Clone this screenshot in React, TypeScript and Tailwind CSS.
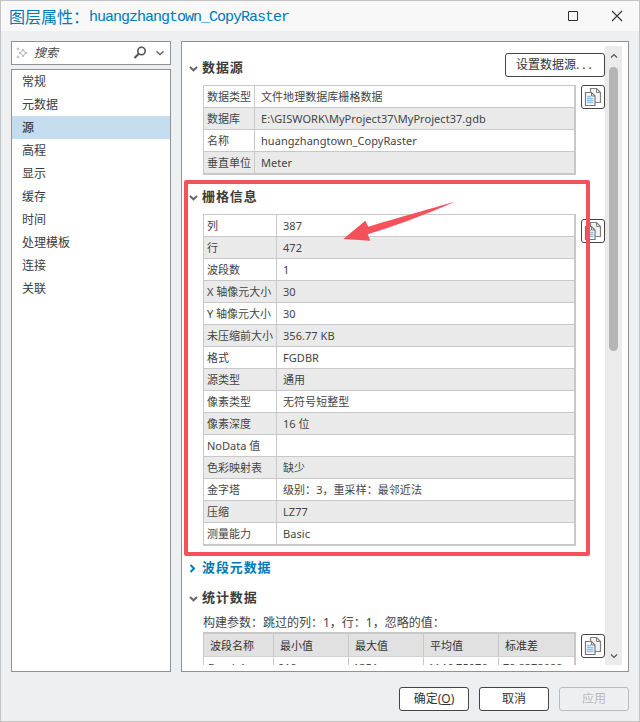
import React from 'react';
import { clsx } from 'clsx';

const navItems = ['常规', '元数据', '源', '高程', '显示', '缓存', '时间', '处理模板', '连接', '关联'];

const sourceRows = [
  ['数据类型', '文件地理数据库栅格数据'],
  ['数据库', 'E:\\GISWORK\\MyProject37\\MyProject37.gdb'],
  ['名称', 'huangzhangtown_CopyRaster'],
  ['垂直单位', 'Meter'],
];

const rasterRows = [
  ['列', '387'],
  ['行', '472'],
  ['波段数', '1'],
  ['X 轴像元大小', '30'],
  ['Y 轴像元大小', '30'],
  ['未压缩前大小', '356.77 KB'],
  ['格式', 'FGDBR'],
  ['源类型', '通用'],
  ['像素类型', '无符号短整型'],
  ['像素深度', '16 位'],
  ['NoData 值', ''],
  ['色彩映射表', '缺少'],
  ['金字塔', '级别：3，重采样：最邻近法'],
  ['压缩', 'LZ77'],
  ['测量能力', 'Basic'],
];

const statHeaders = ['波段名称', '最小值', '最大值', '平均值', '标准差'];
const statValues = ['Band_1', '919', '1351', '1146.75976', '79.8373029'];

const CopyButton: React.FC = () => (
  <button className="flex h-6 w-6 shrink-0 items-center justify-center rounded-[3px] border border-[#444] bg-white">
    <svg width="18" height="20" viewBox="0 0 18 20" fill="none" className="shrink-0">
      <path d="M6.500 1.500h6l4 4v10h-10z" fill="#f3f3f3" stroke="#808080" strokeWidth="1.200" />
      <path d="M12.500 1.500v4h4" stroke="#808080" />
      <path d="M1.500 5.500h6l3.500 3.500v9.500h-9.500z" fill="#fff" stroke="#777" strokeWidth="1.200" />
      <path d="M7.500 5.500v3.500h3.500" stroke="#777" />
      <path d="M3 9.500h4M3 11.500h6.500M3 13.500h6.500M3 15.500h6.500" stroke="#8fc3e6" strokeWidth="1.400" />
    </svg>
  </button>
);

type SectionTitleProps = { label: string; collapsed?: boolean };

const SectionTitle: React.FC<SectionTitleProps> = ({ label, collapsed }) => (
  <div
    className={clsx(
      'flex h-5 items-center text-[13px] font-bold tracking-[0.9px]',
      collapsed ? 'text-[#0079b8]' : 'text-[#3c3c3c]'
    )}
  >
    <svg width="12" height="10" viewBox="0 0 12 10" fill="none" className="mr-0.5 shrink-0" strokeWidth="2">
      {collapsed ? (
        <path d="M2.500 2l3.500 3.500L2.500 9" stroke="#0079b8" />
      ) : (
        <path d="M2 4l3.500 3.300L9 4" stroke="#666" />
      )}
    </svg>
    <span>{label}</span>
  </div>
);

type PropertyTableProps = { rows: string[][]; narrow?: boolean };

const PropertyTable: React.FC<PropertyTableProps> = ({ rows, narrow }) => (
  <div className="w-[373px] border-t border-r-2 border-b-2 border-l border-[#c8c8c8] text-[11px] text-[#444]">
    {rows.map(([name, value], i) => (
      <div
        key={name}
        className={clsx(
          'flex',
          i % 2 ? 'bg-[#eaeaea]' : 'bg-white',
          i < rows.length - 1 ? 'h-[22px] border-b border-[#c8c8c8]' : 'h-[21px]'
        )}
      >
        <div
          className={clsx(
            'flex shrink-0 items-center border-r border-[#c8c8c8] pt-0.5 pl-[3px] whitespace-nowrap',
            narrow ? 'w-[51px]' : 'w-[73px]'
          )}
        >
          {name}
        </div>
        <div className="flex items-center pt-0.5 pl-1.5 tracking-[0.05px] whitespace-nowrap">{value}</div>
      </div>
    ))}
  </div>
);

const SearchBox: React.FC = () => (
  <div className="flex h-6 w-40 items-center border border-[#929292] bg-white">
    <svg width="12" height="12" viewBox="0 0 12 12" fill="none" stroke="#a9a9a9" className="ml-1 shrink-0">
      <path d="M7 2l1.200 2.800L11 6 8.200 7.200 7 10 5.800 7.200 3 6l2.800-1.200z" strokeWidth=".9" />
      <path d="M2 .5v3M.5 2h3M2 8.500v3M.5 10h3" strokeWidth=".8" />
    </svg>
    <span className="ml-1.5 flex-1 text-xs text-[#444] italic">搜索</span>
    <svg width="14" height="14" viewBox="0 0 14 14" fill="none" stroke="#555" className="mr-2">
      <circle cx="8.500" cy="5" r="3.700" strokeWidth="1.600" />
      <path d="M6 7.500L1.500 12" strokeWidth="2.200" />
    </svg>
    <svg width="10" height="8" viewBox="0 0 10 8" fill="none" stroke="#555" className="mr-[5px]">
      <path d="M1.500 2.200L5 5.700l3.500-3.500" strokeWidth="1.300" />
    </svg>
  </div>
);

const StatsTable: React.FC = () => (
  <div className="w-[373px] border-t-2 border-r-2 border-l border-[#c8c8c8] text-[11px] text-[#444]">
    <div className="flex h-[23px] border-b border-[#d0d0d0] bg-[#e1e1e1]">
      {statHeaders.map((h, i) => (
        <div
          key={h}
          className={clsx(
            'flex items-center pt-0.5 pl-1.5 text-[#333]',
            i === 0 ? 'w-[70px]' : 'w-[75px]',
            i < 4 && 'border-r border-[#c8c8c8]'
          )}
        >
          {h}
        </div>
      ))}
    </div>
    <div className="flex h-[22px]">
      {statValues.map((v, i) => (
        <div
          key={v}
          className={clsx(
            'flex items-center pl-1',
            i === 0 ? 'w-[70px]' : 'w-[75px]',
            i < 4 && 'border-r border-[#c8c8c8]'
          )}
        >
          {v}
        </div>
      ))}
    </div>
  </div>
);

export default function App() {
  return (
    <div className="relative flex h-[722px] w-[640px] flex-col overflow-hidden border border-[#c3c3c3] bg-[#eeeff1] font-['Noto_Sans','Noto_Sans_CJK_SC',sans-serif]">
      {/* Title bar */}
      <header className="flex h-[30px] shrink-0 items-center bg-[#f8f8f8] pr-4 pl-2 text-[#0079b8]">
        <span className="font-['Noto_Sans_CJK_SC',sans-serif] text-base">图层属性：</span>
        <span className="pt-1 font-['Liberation_Mono','Noto_Sans_CJK_SC',monospace] text-[15px] tracking-[-1px]">
          huangzhangtown_CopyRaster
        </span>
        <svg width="12" height="12" viewBox="0 0 12 12" fill="none" stroke="#333" className="ml-auto">
          <path d="M1.500 1.500h9v9h-9z" />
        </svg>
        <svg width="12" height="12" viewBox="0 0 12 12" fill="none" stroke="#333" className="ml-8">
          <path d="M1 1l10 10M11 1L1 11" strokeWidth="1.100" />
        </svg>
      </header>

      <main className="flex gap-2.5 px-2.5 pt-2.5">
        {/* Search and page list */}
        <aside className="flex w-40 flex-col gap-1">
          <SearchBox />
          <nav className="h-[603px] border border-[#929292] bg-white text-xs text-[#3c3c3c]">
            {navItems.map((item) => (
              <div
                key={item}
                className={clsx('flex h-[23px] items-center pl-2.5', item === '源' && 'bg-[#c5dcee] font-medium')}
              >
                {item}
              </div>
            ))}
          </nav>
        </aside>

        <section className="flex h-[631px] w-[448px] border border-[#929292] bg-white pt-1 pr-1.5 pb-1.5">
          <div className="h-[619px] flex-1 overflow-hidden pt-[7px] pl-1.5">
            <div className="flex h-6 items-center justify-between">
              <div className="pt-1.5">
                <SectionTitle label="数据源" />
              </div>
              <button className="flex h-6 w-[100px] items-center rounded-[3px] border border-[#444] pl-2.5 text-xs whitespace-nowrap text-[#333]">
                设置数据源<span className="tracking-[3px]">...</span>
              </button>
            </div>
            <div className="mt-2 flex items-start justify-between pl-[15px]">
              <PropertyTable rows={sourceRows} narrow />
              <CopyButton />
            </div>

            <div className="mt-3">
              <SectionTitle label="栅格信息" />
            </div>
            <div className="mt-[7px] flex items-start justify-between pl-[15px]">
              <PropertyTable rows={rasterRows} />
              <div className="mt-[5px]">
                <CopyButton />
              </div>
            </div>

            <div className="mt-3">
              <SectionTitle label="波段元数据" collapsed />
            </div>
            <div className="mt-2.5">
              <SectionTitle label="统计数据" />
            </div>
            <p className="mt-1.5 h-[18px] pl-[15px] text-xs leading-[18px] whitespace-nowrap text-[#444]">
              构建参数：跳过的列：1，行：1，忽略的值：
            </p>
            <div className="flex items-start justify-between pl-[15px]">
              <StatsTable />
              <div className="mt-0.5">
                <CopyButton />
              </div>
            </div>
          </div>

          {/* Scrollbar */}
          <div className="flex h-[619px] w-[17px] flex-col items-center bg-[#ebebeb]">
            <svg width="8" height="6" viewBox="0 0 8 6" fill="none" stroke="#555" className="mt-[7px] shrink-0">
              <path d="M1 4.500l3-3 3 3" strokeWidth="1.200" />
            </svg>
            <div className="mt-2 h-[284px] w-[9px] shrink-0 rounded-full bg-[#b5b5b5]" />
            <svg width="8" height="6" viewBox="0 0 8 6" fill="none" stroke="#555" className="mt-auto mb-1.5 shrink-0">
              <path d="M1 1.500l3 3 3-3" strokeWidth="1.200" />
            </svg>
          </div>
        </section>
      </main>

      <footer className="mt-[15px] flex justify-end gap-2.5 pr-2.5 text-xs text-[#333]">
        <button className="h-6 w-[70px] rounded-[3px] border border-[#444] bg-white leading-[22px]">
          确定(<span className="underline">O</span>)
        </button>
        <button className="h-6 w-[70px] rounded-[3px] border border-[#444] bg-white leading-[22px]">取消</button>
        <button className="h-6 w-[70px] rounded-[3px] border border-[#bbb] leading-[22px] text-[#bbb]">应用</button>
      </footer>

      {/* Callout around the raster section */}
      <div className="pointer-events-none absolute top-[179px] left-[183px] h-[376px] w-[406px] rounded-[2px] border-4 border-[#f5515b]">
        <svg width="114" height="42" viewBox="0 0 114 42" className="absolute top-[17px] left-[154px]">
          <path
            d="M1.300 38L23.300 19.700L26.300 25.700C48 19 88 8 113 .5C88 12 50 26 25.700 33.300L28.300 39.700Z"
            fill="#f5515b"
          />
        </svg>
      </div>
    </div>
  );
}
